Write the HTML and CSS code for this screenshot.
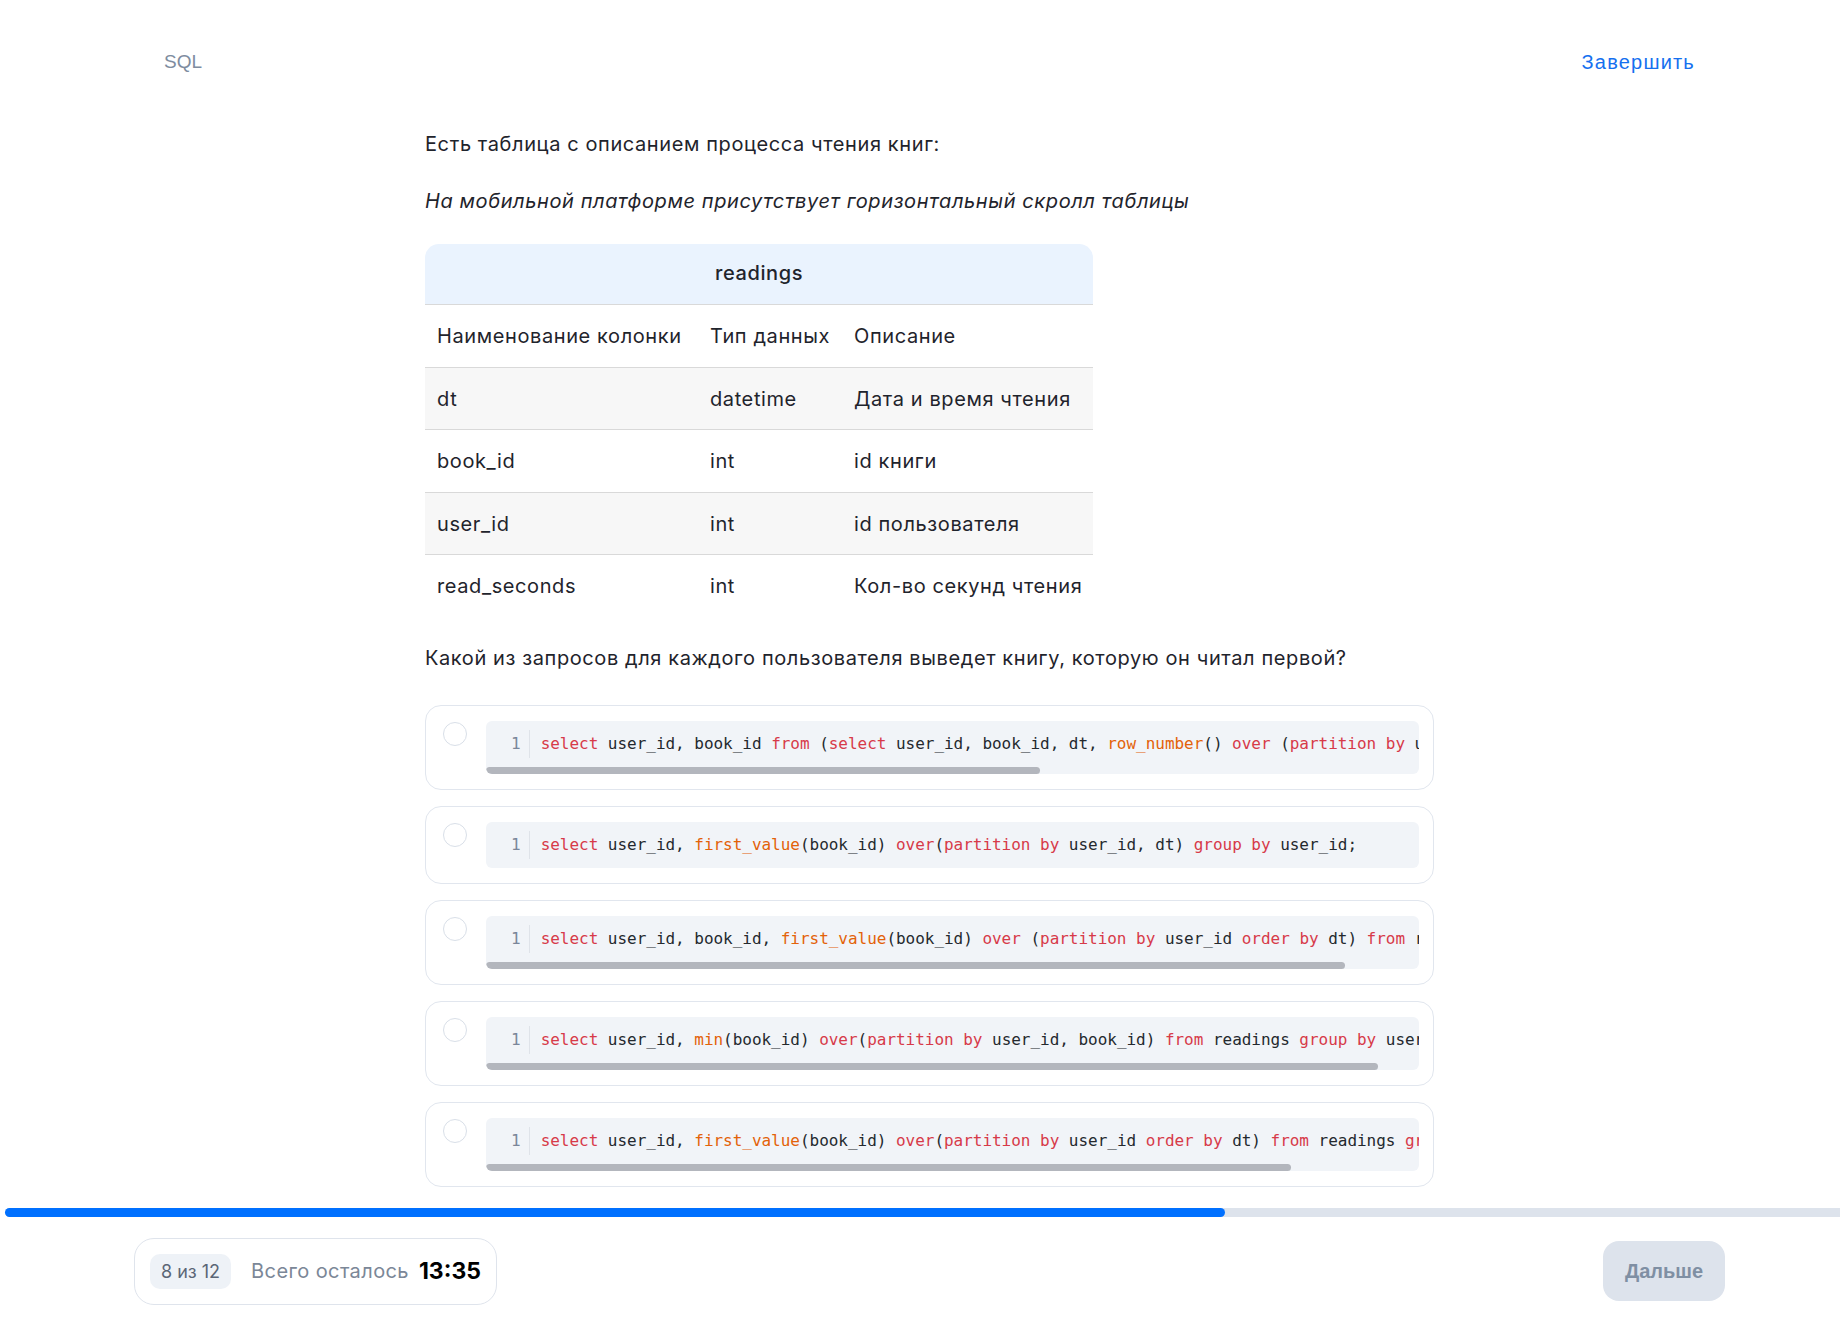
FILE: index.html
```html
<!DOCTYPE html>
<html lang="ru">
<head>
<meta charset="utf-8">
<title>SQL</title>
<link rel="stylesheet" href="styles.css">
</head>
<body>
<div class="page">
  <header class="topbar">
    <span class="section-name">SQL</span>
    <a class="finish" href="#">Завершить</a>
  </header>

  <main class="content">
    <p class="lead">Есть таблица с описанием процесса чтения книг:</p>
    <p class="note">На мобильной платформе присутствует горизонтальный скролл таблицы</p>

    <table class="schema">
      <colgroup>
        <col class="c1"><col class="c2"><col class="c3">
      </colgroup>
      <thead>
        <tr><th colspan="3">readings</th></tr>
      </thead>
      <tbody>
        <tr><td>Наименование колонки</td><td>Тип данных</td><td>Описание</td></tr>
        <tr class="alt"><td>dt</td><td>datetime</td><td>Дата и время чтения</td></tr>
        <tr><td>book_id</td><td>int</td><td>id книги</td></tr>
        <tr class="alt"><td>user_id</td><td>int</td><td>id пользователя</td></tr>
        <tr><td>read_seconds</td><td>int</td><td>Кол-во секунд чтения</td></tr>
      </tbody>
    </table>

    <p class="question">Какой из запросов для каждого пользователя выведет книгу, которую он читал первой?</p>

    <ul class="options">
      <li class="option">
        <span class="radio"></span>
        <div class="code">
          <div class="code-line"><span class="ln">1</span><code class="src"><span class="kw">select</span> user_id, book_id <span class="kw">from</span> (<span class="kw">select</span> user_id, book_id, dt, <span class="fn">row_number</span>() <span class="kw">over</span> (<span class="kw">partition</span> <span class="kw">by</span> user_id <span class="kw">order</span> <span class="kw">by</span> dt) <span class="kw">as</span> rn <span class="kw">from</span> readings) t <span class="kw">where</span> rn = 1;</code></div>
          <div class="scroll"><div class="thumb" style="width:59.4%"></div></div>
        </div>
      </li>
      <li class="option">
        <span class="radio"></span>
        <div class="code">
          <div class="code-line"><span class="ln">1</span><code class="src"><span class="kw">select</span> user_id, <span class="fn">first_value</span>(book_id) <span class="kw">over</span>(<span class="kw">partition</span> <span class="kw">by</span> user_id, dt) <span class="kw">group</span> <span class="kw">by</span> user_id;</code></div>
        </div>
      </li>
      <li class="option">
        <span class="radio"></span>
        <div class="code">
          <div class="code-line"><span class="ln">1</span><code class="src"><span class="kw">select</span> user_id, book_id, <span class="fn">first_value</span>(book_id) <span class="kw">over</span> (<span class="kw">partition</span> <span class="kw">by</span> user_id <span class="kw">order</span> <span class="kw">by</span> dt) <span class="kw">from</span> readings;</code></div>
          <div class="scroll"><div class="thumb" style="width:92.1%"></div></div>
        </div>
      </li>
      <li class="option">
        <span class="radio"></span>
        <div class="code">
          <div class="code-line"><span class="ln">1</span><code class="src"><span class="kw">select</span> user_id, <span class="fn">min</span>(book_id) <span class="kw">over</span>(<span class="kw">partition</span> <span class="kw">by</span> user_id, book_id) <span class="kw">from</span> readings <span class="kw">group</span> <span class="kw">by</span> user_id;</code></div>
          <div class="scroll"><div class="thumb" style="width:95.6%"></div></div>
        </div>
      </li>
      <li class="option">
        <span class="radio"></span>
        <div class="code">
          <div class="code-line"><span class="ln">1</span><code class="src"><span class="kw">select</span> user_id, <span class="fn">first_value</span>(book_id) <span class="kw">over</span>(<span class="kw">partition</span> <span class="kw">by</span> user_id <span class="kw">order</span> <span class="kw">by</span> dt) <span class="kw">from</span> readings <span class="kw">group</span> <span class="kw">by</span> user_id;</code></div>
          <div class="scroll"><div class="thumb" style="width:86.3%"></div></div>
        </div>
      </li>
    </ul>
  </main>

  <div class="progress"><div class="progress-fill" style="width:66.5%"></div></div>

  <footer class="bottombar">
    <div class="status">
      <span class="counter">8 из 12</span>
      <span class="remain">Всего осталось</span>
      <span class="timer">13:35</span>
    </div>
    <button class="next" type="button">Дальше</button>
  </footer>
</div>
</body>
</html>
```

FILE: styles.css
```css
* { box-sizing: border-box; }

html, body {
  margin: 0;
  padding: 0;
  background: #ffffff;
}

body {
  font-family: Inter, "Noto Sans", sans-serif;
  color: #1f242c;
  font-size: 20px;
  line-height: 28px;
  letter-spacing: 0.6px;
  overflow: hidden;
}

.page {
  width: 1840px;
}

/* ---------- top bar ---------- */
.topbar {
  display: flex;
  justify-content: space-between;
  align-items: center;
  padding: 50px 145px 0 164px;
  letter-spacing: 0;
}

.section-name {
  font-family: "Liberation Sans", Arial, sans-serif;
  font-size: 19px;
  line-height: 24px;
  color: #7e8ca0;
}

.finish {
  font-family: "Liberation Sans", Arial, sans-serif;
  font-size: 20px;
  line-height: 24px;
  color: #1570ef;
  letter-spacing: 1.2px;
  text-decoration: none;
}

/* ---------- content ---------- */
.content {
  width: 1009px;
  margin-left: 425px;
}

.lead {
  margin: 56px 0 0;
}

.note {
  margin: 29px 0 0;
  font-style: italic;
}

.schema {
  margin-top: 29px;
  width: 668px;
  border-collapse: separate;
  border-spacing: 0;
  table-layout: fixed;
}

.schema .c1 { width: 273px; }
.schema .c2 { width: 144px; }
.schema .c3 { width: 251px; }

.schema th {
  background: #eaf3fe;
  font-weight: 500;
  text-align: center;
  padding: 15px 12px 17px;
  line-height: 28px;
  border-bottom: 1px solid #d9d9d9;
  border-radius: 14px 14px 0 0;
}

.schema td {
  padding: 17px 12px 16.5px;
  line-height: 28px;
  text-align: left;
  white-space: nowrap;
  border-bottom: 1px solid #d9d9d9;
}

.schema tbody tr:last-child td {
  border-bottom: none;
}

.schema tr.alt td {
  background: #f7f7f7;
}

.question {
  margin: 27px 0 0;
}

/* ---------- options ---------- */
.options {
  list-style: none;
  margin: 33px 0 0;
  padding: 0;
  display: flex;
  flex-direction: column;
  gap: 16px;
  letter-spacing: 0;
}

.option {
  display: flex;
  align-items: flex-start;
  gap: 19px;
  border: 1px solid #e1e6ee;
  border-radius: 16px;
  padding: 15px 14px 15px 17px;
}

.radio {
  flex: 0 0 24px;
  width: 24px;
  height: 24px;
  margin-top: 1px;
  border: 1.5px solid #d9dfe8;
  border-radius: 50%;
  background: #fff;
}

.code {
  flex: 1 1 auto;
  min-width: 0;
  background: #f1f4f8;
  border-radius: 6px;
  overflow: hidden;
}

.code-line {
  display: flex;
  align-items: stretch;
  padding: 9px 0;
  font-family: "DejaVu Sans Mono", "Liberation Mono", monospace;
  font-size: 16px;
  line-height: 28px;
  white-space: pre;
  overflow: hidden;
}

.ln {
  flex: 0 0 auto;
  padding: 0 8px 0 25px;
  border-right: 1px solid #dfe3e9;
  color: #7a8699;
}

.src {
  font-family: inherit;
  padding-left: 11px;
  color: #24292e;
  letter-spacing: -0.03px;
}

.kw { color: #d73a49; }
.fn { color: #e36209; }

.scroll {
  height: 7px;
}

.thumb {
  height: 7px;
  background: #b3b6bd;
  border-radius: 4px;
}

/* ---------- progress ---------- */
.progress {
  margin: 21px 0 0 5px;
  height: 9px;
  background: #dde3ec;
  border-radius: 5px 0 0 5px;
}

.progress-fill {
  height: 9px;
  background: #0070ff;
  border-radius: 5px;
}

/* ---------- bottom bar ---------- */
.bottombar {
  display: flex;
  justify-content: space-between;
  align-items: center;
  margin-top: 21px;
  padding: 0 115px 0 134px;
  letter-spacing: 0;
}

.status {
  display: flex;
  align-items: center;
  border: 1px solid #dfe4ec;
  border-radius: 20px;
  padding: 15px;
}

.counter {
  background: #eef2f7;
  border-radius: 10px;
  padding: 0 11px;
  font-size: 18px;
  line-height: 35px;
  color: #5b6676;
}

.remain {
  margin-left: 20px;
  font-size: 20px;
  letter-spacing: 0.4px;
  color: #7b8797;
}

.timer {
  margin-left: 10px;
  font-size: 23px;
  font-weight: 700;
  color: #000;
}

.next {
  width: 122px;
  height: 60px;
  border: none;
  border-radius: 16px;
  background: #dde3ec;
  color: #7f8fa3;
  font-family: "Liberation Sans", Arial, sans-serif;
  font-size: 20px;
  font-weight: 700;
  padding: 0;
}
```
